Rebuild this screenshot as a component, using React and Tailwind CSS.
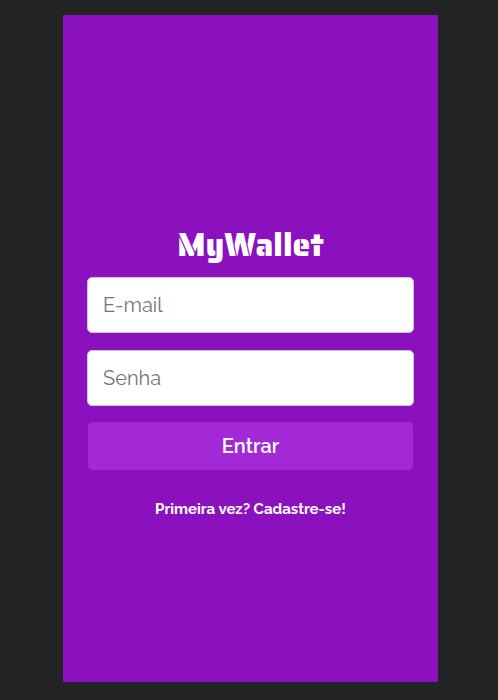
const inputStyle =
  "block h-14 w-full rounded-[5px] border border-[#d0c5d5] bg-[#fffffe] px-[15px] font-['Raleway','Lato',sans-serif] text-[20px] font-normal leading-6 text-[#757575] outline-none placeholder:text-[#757575] placeholder:opacity-100";

function Logo() {
  return (
    <h1 className="h-[50px] whitespace-nowrap text-center font-['Saira_Stencil_One','Inter',sans-serif] text-[32px] font-normal leading-[50px] text-white">
      MyWallet
    </h1>
  );
}

export default function App() {
  return (
    <div className="flex h-[700px] w-[498px] overflow-hidden bg-[#212324] pl-[63px] pt-[15px]">
      <main className="flex h-[667px] w-[375px] flex-col bg-[#8c11be] px-6 pt-[205px] font-['Raleway','Lato',sans-serif]">
        <Logo />
        <form className="mt-[7px] flex flex-col">
          <input type="email" placeholder="E-mail" className={inputStyle} />
          <input type="password" placeholder="Senha" className={inputStyle + " mt-[17px]"} />
          <button
            type="button"
            className="mx-px mt-4 h-12 rounded-[5px] bg-[#a328d6] text-[20px] font-semibold text-white"
          >
            Entrar
          </button>
        </form>
        <a className="mt-[30px] whitespace-nowrap text-center text-[15px] font-bold leading-[18px] text-white">
          Primeira vez? Cadastre-se!
        </a>
      </main>
    </div>
  );
}
